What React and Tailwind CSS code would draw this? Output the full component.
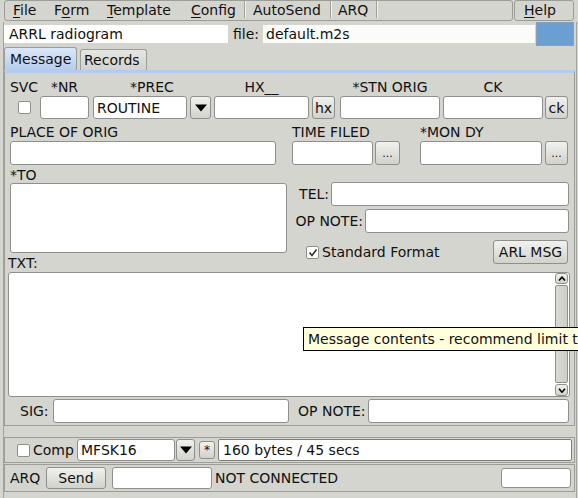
import React from "react";

const inp = "bg-white border border-[#8f8f8b] rounded-[3px] box-border";
const btn =
  "border border-[#8f8f8b] rounded-[3px] box-border bg-linear-to-b from-[#f1f1ee] to-[#d2d2cc] flex items-center justify-center";
const chk = "w-[13px] h-[13px] bg-white border border-[#8f8f8b] rounded-[2px] box-border";

function Tri() {
  return (
    <svg width="12" height="8" viewBox="0 0 12 8">
      <path d="M0 0.5H12L6 7.5Z" fill="#000" />
    </svg>
  );
}

function Sep() {
  return (
    <div className="flex self-stretch">
      <div className="w-px bg-[#a0a09b]" />
      <div className="w-px bg-[#f2f2ef]" />
    </div>
  );
}

export default function App() {
  return (
    <div className="w-[578px] h-[498px] overflow-hidden relative bg-[#d5d5cf] text-[14px] text-[#111] font-['DejaVu_Sans',sans-serif] leading-none select-none">
      {/* Menu bar */}
      <div className="flex h-[21px]">
        <div className="ml-[4px] w-[509px] h-[21px] border border-[#9d9d98] rounded-[3px] box-border flex items-center pl-[8px] pb-[2px]">
          <span className="w-[41px]">
            <span className="underline underline-offset-2">F</span>ile
          </span>
          <span className="w-[53px]">
            F<span className="underline underline-offset-2">o</span>rm
          </span>
          <span className="w-[84px]">
            <span className="underline underline-offset-2">T</span>emplate
          </span>
          <span className="w-[53px]">
            <span className="underline underline-offset-2">C</span>onfig
          </span>
          <Sep />
          <span className="w-[84px] pl-[7px]">AutoSend</span>
          <Sep />
          <span className="w-[44px] pl-[6px]">ARQ</span>
          <Sep />
        </div>
        <div className="ml-[1px] w-[60px] h-[21px] border border-[#9d9d98] rounded-[3px] box-border flex items-center pl-[9px] pb-[2px]">
          <span className="underline underline-offset-2">H</span>elp
        </div>
      </div>

      <div className="border-l border-r border-b border-[#a3a39e] ml-[3px] w-[574px] h-[477px] box-border">
        {/* Title row */}
        <div className="flex items-center h-[24px] mt-[1px]">
          <div className="w-[224px] h-[18px] bg-white flex items-center pl-[5px]">ARRL radiogram</div>
          <span className="ml-[5px] w-[30px]">file:</span>
          <div className="w-[272px] h-[18px] bg-[#fbfbfa] flex items-center pl-[3px]">default.m2s</div>
          <div className="ml-[1px] w-[38px] h-[24px] bg-[#6b9fd2] border border-[#8a9fb8] box-border" />
        </div>

        {/* Tabs */}
        <div className="flex items-end h-[24px]">
          <div className="w-[73px] h-[23px] rounded-t-[3px] border border-b-0 border-[#9d9d98] box-border bg-linear-to-b from-[#dbe7f8] to-[#b7cdee] flex items-center pl-[5px] pb-[1px]">
            Message
          </div>
          <div className="ml-[3px] w-[67px] h-[21px] rounded-t-[3px] border border-b-0 border-[#9d9d98] box-border bg-linear-to-b from-[#e6e6e2] to-[#d3d3cd] flex items-center pl-[3px]">
            Records
          </div>
        </div>

        {/* Panel */}
        <div className="w-[571px] border border-[#9d9d98] border-t-[3px] border-t-[#b3cbee] box-border pb-[2px]">
          {/* Row A */}
          <div className="flex mt-[5px]">
            <div className="ml-[4px] w-[30px] flex flex-col items-center">
              <div className="h-[17px] flex items-center">SVC</div>
              <div className="mt-[1px] h-[23px] flex items-center">
                <div className={chk} />
              </div>
            </div>
            <div className="ml-[1px] w-[49px] flex flex-col items-center">
              <div className="h-[17px] flex items-center">*NR</div>
              <div className={`mt-[1px] h-[23px] w-full ${inp}`} />
            </div>
            <div className="ml-[4px] w-[118px] flex flex-col items-center">
              <div className="h-[17px] flex items-center">*PREC</div>
              <div className="mt-[1px] h-[23px] w-full flex">
                <div className={`w-[94px] h-[23px] ${inp} flex items-center pl-[3px]`}>ROUTINE</div>
                <div className={`ml-[3px] w-[21px] h-[23px] ${btn}`}>
                  <Tri />
                </div>
              </div>
            </div>
            <div className="ml-[3px] w-[95px] flex flex-col items-center">
              <div className="h-[17px] flex items-center">HX__</div>
              <div className={`mt-[1px] h-[23px] w-full ${inp}`} />
            </div>
            <div className="ml-[3px] w-[23px] flex flex-col">
              <div className="h-[17px]" />
              <div className={`mt-[1px] h-[23px] w-full ${btn}`}>hx</div>
            </div>
            <div className="ml-[5px] w-[100px] flex flex-col items-center">
              <div className="h-[17px] flex items-center">*STN ORIG</div>
              <div className={`mt-[1px] h-[23px] w-full ${inp}`} />
            </div>
            <div className="ml-[3px] w-[100px] flex flex-col items-center">
              <div className="h-[17px] flex items-center">CK</div>
              <div className={`mt-[1px] h-[23px] w-full ${inp}`} />
            </div>
            <div className="ml-[2px] w-[23px] flex flex-col">
              <div className="h-[17px]" />
              <div className={`mt-[1px] h-[23px] w-full ${btn}`}>ck</div>
            </div>
          </div>

          {/* Row B */}
          <div className="flex mt-[4px]">
            <div className="ml-[5px] w-[266px] flex flex-col">
              <div className="h-[17px] flex items-center">PLACE OF ORIG</div>
              <div className={`mt-[1px] h-[24px] w-full ${inp}`} />
            </div>
            <div className="ml-[16px] w-[81px] flex flex-col">
              <div className="h-[17px] flex items-center">TIME FILED</div>
              <div className={`mt-[1px] h-[24px] w-full ${inp}`} />
            </div>
            <div className="ml-[2px] w-[25px] flex flex-col">
              <div className="h-[17px]" />
              <div className={`mt-[1px] h-[24px] w-full ${btn} text-[11px]`}>...</div>
            </div>
            <div className="ml-[20px] w-[122px] flex flex-col">
              <div className="h-[17px] flex items-center">*MON DY</div>
              <div className={`mt-[1px] h-[24px] w-full ${inp}`} />
            </div>
            <div className="ml-[3px] w-[23px] flex flex-col">
              <div className="h-[17px]" />
              <div className={`mt-[1px] h-[24px] w-full ${btn} text-[11px]`}>...</div>
            </div>
          </div>

          {/* Row C */}
          <div className="flex">
            <div className="ml-[5px] w-[277px] flex flex-col">
              <div className="mt-[1px] h-[17px] flex items-center">*TO</div>
              <div className={`h-[70px] w-full ${inp}`} />
              <div className="mt-[1px] h-[17px] flex items-center -ml-[2px]">TXT:</div>
            </div>
            <div className="ml-[5px] w-[277px] flex flex-col">
              <div className="mt-[17px] h-[24px] flex items-center justify-end">
                <span className="mr-[2px]">TEL:</span>
                <div className={`w-[238px] h-[24px] ${inp}`} />
              </div>
              <div className="mt-[3px] h-[24px] flex items-center justify-end">
                <span className="mr-[2px]">OP NOTE:</span>
                <div className={`w-[204px] h-[24px] ${inp}`} />
              </div>
              <div className="mt-[7px] h-[24px] flex items-center">
                <div className={`ml-[14px] ${chk} flex items-center justify-center`}>
                  <svg width="10" height="9" viewBox="0 0 10 9">
                    <path d="M1.5 4.5L4 7.5L8.5 1.5" stroke="#333" strokeWidth="1.6" fill="none" />
                  </svg>
                </div>
                <span className="ml-[3px]">Standard Format</span>
                <div className={`ml-auto mr-[1px] w-[75px] h-[24px] ${btn}`}>ARL MSG</div>
              </div>
            </div>
          </div>

          {/* TXT area */}
          <div className={`ml-[3px] mt-[1px] w-[562px] h-[125px] ${inp} flex justify-end pr-[1px]`}>
            <div className="w-[13px] h-full flex flex-col">
              <div className={`h-[11px] ${btn} rounded-[2px]`}>
                <svg width="8" height="5" viewBox="0 0 8 5">
                  <path d="M1 4.5L4 1.2L7 4.5" stroke="#000" strokeWidth="1.6" fill="none" />
                </svg>
              </div>
              <div className="flex-1 border border-[#8f8f8b] rounded-[2px] bg-linear-to-r from-[#dadad5] to-[#cfcfc9] mt-px" />
              <div className={`h-[12px] ${btn} rounded-[2px] mt-px`}>
                <svg width="8" height="5" viewBox="0 0 8 5">
                  <path d="M1 0.8L4 4.2L7 0.8" stroke="#000" strokeWidth="1.6" fill="none" />
                </svg>
              </div>
            </div>
          </div>

          {/* SIG row */}
          <div className="flex items-center mt-[2px] h-[24px]">
            <span className="ml-[15px] w-[33px]">SIG:</span>
            <div className={`w-[236px] h-[24px] ${inp}`} />
            <span className="ml-[9px] w-[70px]">OP NOTE:</span>
            <div className={`w-[201px] h-[24px] ${inp}`} />
          </div>
        </div>

        {/* Comp row */}
        <div className="mt-[11px] w-[571px] h-[26px] border border-[#9d9d98] box-border flex items-center">
          <div className={`ml-[12px] ${chk}`} />
          <span className="ml-[3px] w-[44px]">Comp</span>
          <div className={`w-[98px] h-[22px] ${inp} flex items-center pl-[3px]`}>MFSK16</div>
          <div className={`ml-[1px] w-[19px] h-[22px] ${btn}`}>
            <Tri />
          </div>
          <div className={`ml-[4px] w-[16px] h-[18px] ${btn} text-[12px]`}>*</div>
          <div className="ml-[3px] w-[354px] h-[22px] bg-white border border-[#7d7d79] rounded-[2px] box-border flex items-center pl-[4px]">
            160 bytes / 45 secs
          </div>
        </div>

        {/* ARQ row */}
        <div className="mt-[1px] w-[571px] h-[28px] border border-[#9d9d98] box-border flex items-center">
          <span className="ml-[5px] w-[36px]">ARQ</span>
          <div className={`w-[60px] h-[22px] ${btn}`}>Send</div>
          <div className={`ml-[6px] w-[100px] h-[22px] ${inp}`} />
          <span className="ml-[3px]">NOT CONNECTED</span>
          <div className={`ml-auto mr-[3px] w-[70px] h-[20px] ${inp}`} />
        </div>
      </div>

      {/* Tooltip */}
      <div className="absolute left-[303px] top-[327px] h-[24px] border border-black bg-[#ffffdc] flex items-center pl-[4px] pr-[4px] whitespace-nowrap box-border">
        Message contents - recommend limit to 25 words
      </div>
    </div>
  );
}
